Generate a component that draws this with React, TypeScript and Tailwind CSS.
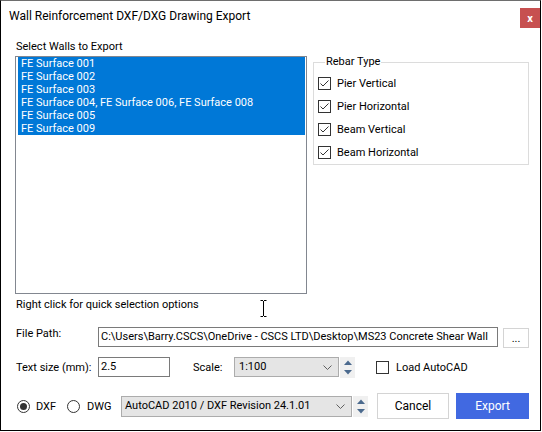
import React from "react";

const walls = [
  "FE Surface 001",
  "FE Surface 002",
  "FE Surface 003",
  "FE Surface 004, FE Surface 006, FE Surface 008",
  "FE Surface 005",
  "FE Surface 009",
];

const rebarTypes = ["Pier Vertical", "Pier Horizontal", "Beam Vertical", "Beam Horizontal"];

function CheckBox({ checked }: { checked: boolean }) {
  return (
    <span className="flex h-[13px] w-[13px] shrink-0 items-center justify-center border border-[#333333] bg-white">
      {checked && (
        <svg width="11" height="11" viewBox="0 0 11 11">
          <polyline points="1.5,5.5 4,8 9.5,2.5" fill="none" stroke="#333333" strokeWidth="1" />
        </svg>
      )}
    </span>
  );
}

function Radio({ checked }: { checked: boolean }) {
  return (
    <span className="flex h-[13px] w-[13px] shrink-0 items-center justify-center rounded-full border border-[#333333] bg-white">
      {checked && <span className="h-[7px] w-[7px] rounded-full bg-[#333333]" />}
    </span>
  );
}

function Chevron() {
  return (
    <svg width="9" height="5" viewBox="0 0 9 5">
      <polyline points="0.5,0.5 4.5,4.5 8.5,0.5" fill="none" stroke="#606060" strokeWidth="1" />
    </svg>
  );
}

function Spinner({ className }: { className: string }) {
  return (
    <div className={`flex w-[15px] flex-col items-center justify-center gap-[5px] bg-[#f0f0f0] ${className}`}>
      <svg width="8" height="5" viewBox="0 0 8 5">
        <polygon points="0,5 4,0.5 8,5" fill="#4b6a8e" />
      </svg>
      <svg width="8" height="5" viewBox="0 0 8 5">
        <polygon points="0,0 4,4.5 8,0" fill="#4b6a8e" />
      </svg>
    </div>
  );
}

export default function App() {
  return (
    <div className="h-[432px] w-[542px] bg-white">
      <div className="relative flex h-[431px] w-[541px] flex-col border border-black border-t-[#6e6e6e] bg-white font-['Roboto','Liberation_Sans',sans-serif] text-[11px] text-black">
        {/* title bar */}
        <div className="flex h-[39px] shrink-0 items-start justify-between">
          <span className="ml-[8px] mt-[7px] text-[12px] leading-[16px]">
            Wall Reinforcement DXF/DXG Drawing Export
          </span>
          <div className="mt-[7px] flex h-[20px] w-[20px] items-center justify-center bg-[#c75050] text-[11px] font-bold leading-none text-white">
            x
          </div>
        </div>

        {/* walls list + rebar type */}
        <div className="flex items-start pl-[14px]">
          <div className="flex w-[292px] flex-col">
            <span className="pl-[1px] leading-[13px]">Select Walls to Export</span>
            <div className="mt-[3px] h-[238px] border border-[#828790] bg-white pl-[2px] pr-[1px]">
              {walls.map((w) => (
                <div key={w} className="whitespace-nowrap bg-[#0078d7] pl-[3px] leading-[13px] text-white">
                  {w}
                </div>
              ))}
            </div>
          </div>

          <fieldset className="ml-[6px] mt-[16px] w-[216px] border border-[#dcdcdc] pb-[5px] pl-[4px] pt-[9px]">
            <legend className="ml-[7px] px-[1px] leading-[12px]">Rebar Type</legend>
            <div className="flex flex-col gap-[10px]">
              {rebarTypes.map((r) => (
                <div key={r} className="flex h-[13px] items-center">
                  <CheckBox checked />
                  <span className="ml-[6px] leading-[13px]">{r}</span>
                </div>
              ))}
            </div>
          </fieldset>
        </div>

        <div className="mt-[4px] pl-[15px] leading-[13px]">Right click for quick selection options</div>

        {/* file path */}
        <div className="mt-[16px] flex h-[21px] items-start pl-[15px]">
          <span className="w-[82px] leading-[13px]">File Path:</span>
          <div className="flex h-[20px] w-[400px] items-center overflow-hidden whitespace-nowrap border border-[#7a7a7a] pl-[2px]">
            C:\Users\Barry.CSCS\OneDrive - CSCS LTD\Desktop\MS23 Concrete Shear Wall
          </div>
          <div className="ml-[5px] mt-[1px] flex h-[20px] w-[26px] items-center justify-center border border-[#d4d4d4] bg-white text-[11px] leading-none">
            ...
          </div>
        </div>

        {/* text size / scale */}
        <div className="mt-[9px] flex h-[20px] items-center pl-[15px]">
          <span className="w-[82px] leading-[13px]">Text size (mm):</span>
          <div className="flex h-[20px] w-[72px] items-center border border-[#7a7a7a] pl-[2px]">2.5</div>
          <span className="ml-[23px] w-[41px] leading-[13px]">Scale:</span>
          <div className="flex h-[20px] w-[105px] items-center justify-between border border-[#acacac] bg-[#e5e5e5] pl-[4px] pr-[6px]">
            <span>1:100</span>
            <Chevron />
          </div>
          <Spinner className="ml-[1px] h-[21px]" />
          <span className="ml-[21px]">
            <CheckBox checked={false} />
          </span>
          <span className="ml-[7px] leading-[13px]">Load AutoCAD</span>
        </div>

        {/* format + buttons */}
        <div className="mt-[16px] flex h-[26px] items-center pl-[16px]">
          <div className="flex w-[50px] items-center">
            <Radio checked />
            <span className="ml-[6px] leading-[13px]">DXF</span>
          </div>
          <div className="flex w-[54px] items-center">
            <Radio checked={false} />
            <span className="ml-[7px] leading-[13px]">DWG</span>
          </div>
          <div className="flex h-[21px] w-[231px] items-center justify-between border border-[#acacac] bg-[#e5e5e5] pl-[3px] pr-[6px]">
            <span className="whitespace-nowrap">AutoCAD 2010 / DXF Revision 24.1.01</span>
            <Chevron />
          </div>
          <Spinner className="ml-[1px] h-[21px]" />
          <button className="ml-[9px] flex h-[26px] w-[72px] items-center justify-center border border-[#d4d4d4] bg-white text-[12px] leading-none">
            Cancel
          </button>
          <button className="ml-[7px] flex h-[26px] w-[73px] items-center justify-center bg-[#4169e1] text-[12px] leading-none text-white">
            Export
          </button>
        </div>

        {/* mouse cursor over the dialog */}
        <svg className="absolute left-[259px] top-[299px]" width="7" height="17" viewBox="0 0 7 17">
          <path d="M0.5 0.5H3M4 0.5H6.5M3.5 1V16M0.5 16.5H3M4 16.5H6.5" fill="none" stroke="#000" strokeWidth="1" />
        </svg>
      </div>
    </div>
  );
}
